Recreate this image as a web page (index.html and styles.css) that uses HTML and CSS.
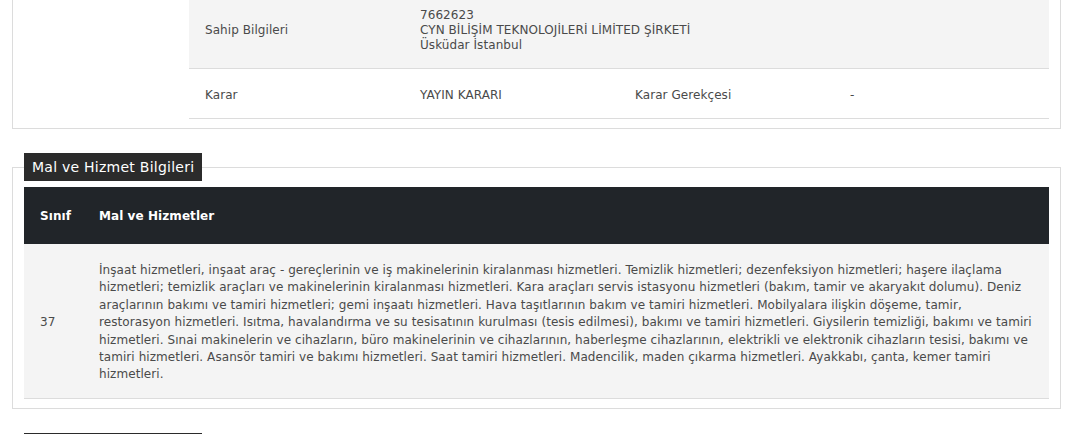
FILE: index.html
```html
<!DOCTYPE html>
<html lang="tr">
<head>
    <meta charset="UTF-8">
    <meta name="viewport" content="width=device-width, initial-scale=1.0">
    <title>Marka Detayı</title>
    <link rel="stylesheet" href="styles.css">
</head>
<body>

<div class="page">
    <fieldset class="box box-top">
        <div class="detail">
            <div class="logo-cell"></div>
            <table class="info">
                <colgroup>
                    <col><col><col><col>
                </colgroup>
                <tr class="shaded owner">
                    <td>Sahip Bilgileri</td>
                    <td colspan="3">7662623<br>CYN BİLİŞİM TEKNOLOJİLERİ LİMİTED ŞİRKETİ<br>Üsküdar İstanbul</td>
                </tr>
                <tr>
                    <td>Karar</td>
                    <td>YAYIN KARARI</td>
                    <td>Karar Gerekçesi</td>
                    <td>-</td>
                </tr>
            </table>
        </div>
    </fieldset>

    <fieldset class="box">
        <legend>Mal ve Hizmet Bilgileri</legend>
        <table class="goods">
            <colgroup>
                <col class="col-class"><col>
            </colgroup>
            <thead>
                <tr>
                    <th>Sınıf</th>
                    <th>Mal ve Hizmetler</th>
                </tr>
            </thead>
            <tbody>
                <tr>
                    <td>37</td>
                    <td>İnşaat hizmetleri, inşaat araç - gereçlerinin ve iş makinelerinin kiralanması hizmetleri. Temizlik hizmetleri; dezenfeksiyon hizmetleri; haşere ilaçlama hizmetleri; temizlik araçları ve makinelerinin kiralanması hizmetleri. Kara araçları servis istasyonu hizmetleri (bakım, tamir ve akaryakıt dolumu). Deniz araçlarının bakımı ve tamiri hizmetleri; gemi inşaatı hizmetleri. Hava taşıtlarının bakım ve tamiri hizmetleri. Mobilyalara ilişkin döşeme, tamir, restorasyon hizmetleri. Isıtma, havalandırma ve su tesisatının kurulması (tesis edilmesi), bakımı ve tamiri hizmetleri. Giysilerin temizliği, bakımı ve tamiri hizmetleri. Sınai makinelerin ve cihazların, büro makinelerinin ve cihazlarının, haberleşme cihazlarının, elektrikli ve elektronik cihazların tesisi, bakımı ve tamiri hizmetleri. Asansör tamiri ve bakımı hizmetleri. Saat tamiri hizmetleri. Madencilik, maden çıkarma hizmetleri. Ayakkabı, çanta, kemer tamiri hizmetleri.</td>
                </tr>
            </tbody>
        </table>
    </fieldset>

    <fieldset class="box">
        <legend>Başvuru İşlem Bilgileri</legend>
    </fieldset>
</div>

</body>
</html>
```

FILE: styles.css
```css
body {
    font-family: "DejaVu Sans", Arial, sans-serif;
    font-size: 12px;
    letter-spacing: 0.07px;
    color: #4a4a4a;
    margin: 0;
    background: #fff;
}
.page {
    width: 1049px;
    margin: -11px 0 0 12px;
}
.box {
    border: 1px solid #dcdcdc;
    margin: 0 0 24px 0;
    padding: 6px 11px 9px 11px;
    min-width: 0;
}
.box-top {
    border-top: none;
    padding-top: 0;
}
.box legend {
    background: #2b2b2b;
    color: #fff;
    font-size: 14px;
    letter-spacing: 0.25px;
    line-height: 28px;
    padding: 0 8px;
}
.detail {
    display: flex;
}
.logo-cell {
    width: 165px;
    flex-shrink: 0;
}
.info {
    width: 860px;
    border-collapse: collapse;
    table-layout: fixed;
}
.info col {
    width: 215px;
}
.info td {
    padding: 19px 16px 15px 16px;
    line-height: 15px;
    border-bottom: 1px solid #dcdcdc;
    vertical-align: middle;
}
.info .shaded td {
    background: #f4f4f4;
}
.goods {
    width: 100%;
    border-collapse: collapse;
    table-layout: fixed;
}
.goods .col-class {
    width: 59px;
}
.goods th {
    background: #212529;
    color: #fff;
    font-weight: 600;
    text-align: left;
    height: 56px;
    padding: 1px 16px 0 16px;
}
.goods td {
    background: #f4f4f4;
    padding: 18px 16px 14px 16px;
    line-height: 17.4px;
    border-bottom: 1px solid #dcdcdc;
    vertical-align: middle;
}
```
